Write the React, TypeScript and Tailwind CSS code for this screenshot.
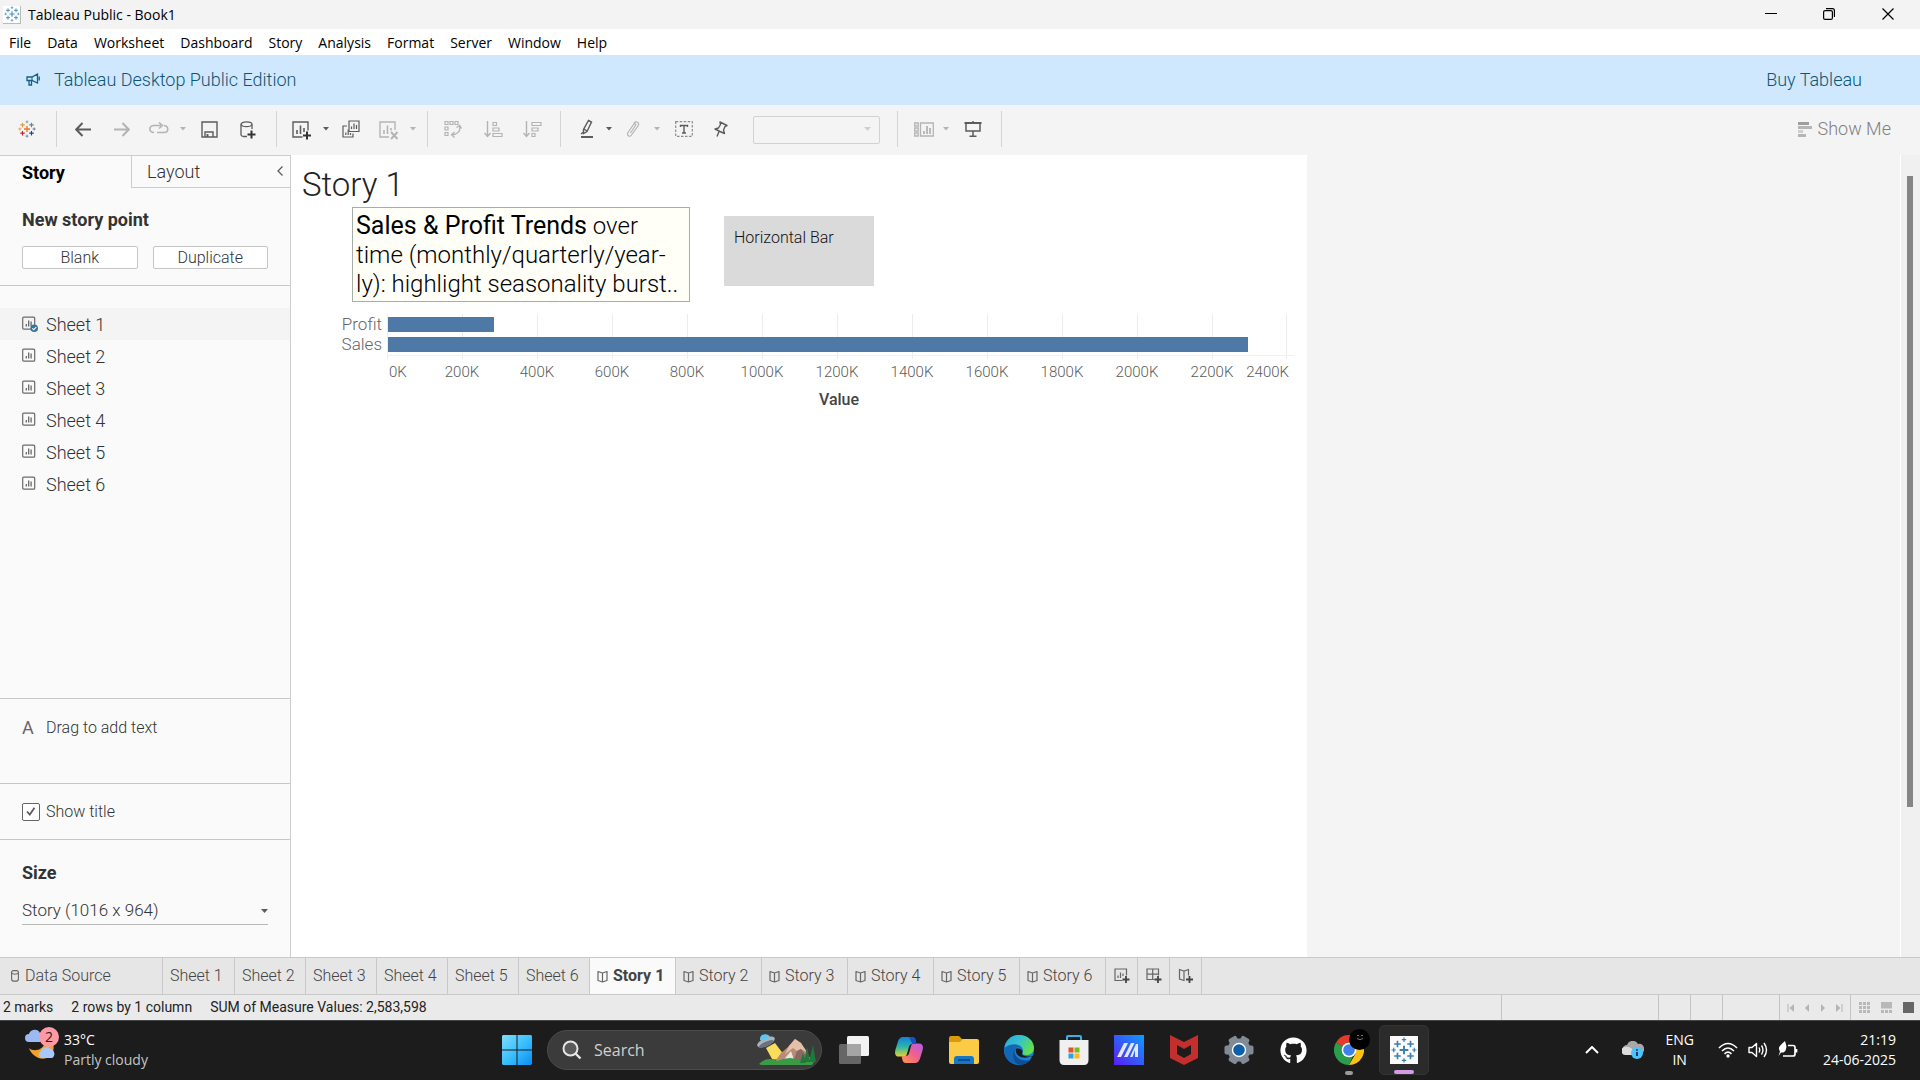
import React from "react";
import { FaGithub } from "react-icons/fa";

type IconProps = { children: React.ReactNode; w: number; h: number; className?: string };

function Icon({ children, w, h, className = "" }: IconProps) {
  return (
    <svg width={w} height={h} viewBox={`0 0 ${w} ${h}`} fill="none" className={`shrink-0 ${className}`} aria-hidden="true">
      {children}
    </svg>
  );
}

/* ---------- Tableau mark ---------- */

const MARK = [
  [12, 12, 4, 1.8, "#e8762c"],
  [6, 6.5, 3, 1.5, "#e59a3c"],
  [18, 6.5, 3, 1.5, "#5b879b"],
  [6, 17.5, 3, 1.5, "#c72035"],
  [18, 17.5, 3, 1.5, "#1f457e"],
  [12, 2.5, 2, 1.1, "#7099a6"],
  [12, 21.5, 2, 1.1, "#59879b"],
  [2.5, 12, 2, 1.1, "#eb912c"],
  [21.5, 12, 2, 1.1, "#5c6692"],
] as const;

function TableauMark({ size, color }: { size: number; color?: string }) {
  return (
    <svg width={size} height={size} viewBox="0 0 24 24" fill="none" aria-hidden="true" className="shrink-0">
      {MARK.map(([x, y, r, sw, c], i) => (
        <path key={i} d={`M${x - r} ${y}H${x + r}M${x} ${y - r}V${y + r}`} stroke={color ?? c} strokeWidth={sw} />
      ))}
    </svg>
  );
}

/* ---------- toolbar ---------- */

const DARK = "#5c5c5c";
const DIM = "#b4b4b4";

function Tool({ label, children, className = "" }: { label: string; children: React.ReactNode; className?: string }) {
  return (
    <button aria-label={label} className={`flex h-8 w-8 shrink-0 items-center justify-center ${className}`}>
      {children}
    </button>
  );
}

function Caret({ dim = false, label, className = "" }: { dim?: boolean; label: string; className?: string }) {
  return (
    <button aria-label={label} className={`flex h-8 w-3 shrink-0 items-center justify-center ${className}`}>
      <Icon w={6} h={4}>
        <path d="M0 0h6L3 3.6z" fill={dim ? DIM : DARK} />
      </Icon>
    </button>
  );
}

function Sep({ className = "" }: { className?: string }) {
  return <div className={`h-9 w-px shrink-0 bg-[#d4d4d4] ${className}`} />;
}

function Toolbar() {
  return (
    <div className="flex h-[50px] shrink-0 items-center bg-[#f4f4f4] pb-[2px] pl-[11px]">
      <Tool label="Start page"><TableauMark size={18} /></Tool>
      <Sep className="ml-[13px]" />
      <Tool label="Undo" className="ml-[10px]">
        <Icon w={16} h={15}><path d="M16 7.5H1.5M7.5 1L1.2 7.5L7.5 14" stroke={DARK} strokeWidth="2" /></Icon>
      </Tool>
      <Tool label="Redo" className="ml-[7px]">
        <Icon w={16} h={15}><path d="M0 7.5H14.5M8.5 1L14.8 7.5L8.5 14" stroke={DIM} strokeWidth="2" /></Icon>
      </Tool>
      <Tool label="Replay animation" className="ml-[5px]">
        <Icon w={20} h={14}>
          <path d="M5 10.5C-.5 10.5-.5 3.5 5 3.5H12M10 .5L13.5 3.5L10 6.5M15 3.5C20 4 20 10.5 15 10.5H8" stroke={DIM} strokeWidth="1.6" />
        </Icon>
      </Tool>
      <Caret dim label="Replay speed" className="ml-[2px]" />
      <Tool label="Save" className="ml-1">
        <Icon w={17} h={17}>
          <path d="M1 1H16V16H1zM4 16V11H12V16" stroke={DARK} strokeWidth="1.4" />
          <path d="M5.5 13h2v3h-2z" fill={DARK} />
        </Icon>
      </Tool>
      <Tool label="New data source" className="ml-[7px]">
        <Icon w={16} h={19} className="mt-[2px]">
          <path d="M7 15.5H3.5C2 15.5 1 14.5 1 13.5V3.5M12 3.5V8" stroke={DARK} strokeWidth="1.3" />
          <ellipse cx="6.5" cy="3.3" rx="5.5" ry="2.4" stroke={DARK} strokeWidth="1.3" />
          <path d="M7.5 13.5H15.5M11.5 9.5V17.5" stroke="#333" strokeWidth="2" />
        </Icon>
      </Tool>
      <Sep className="ml-3" />
      <Tool label="New worksheet" className="ml-[9px]">
        <Icon w={20} h={19} className="mt-[2px]">
          <path d="M10.5 16H1V1H16V9.5" stroke={DARK} strokeWidth="1.4" />
          <path d="M5 13V9M8.5 13V4.5M12 11V7" stroke={DARK} strokeWidth="1.6" />
          <path d="M11 14.5H19M15 10.5V18.5" stroke="#333" strokeWidth="2" />
        </Icon>
      </Tool>
      <Caret label="New sheet options" className="ml-[2px]" />
      <Tool label="Duplicate" className="ml-[3px]">
        <Icon w={18} h={18}>
          <path d="M7 1H17V11.5H7zM5 6H1V17H11V13.5" stroke={DARK} strokeWidth="1.2" />
          <path d="M9.5 9V6.5M12 9V3.5M14.5 9V5M3.8 15V12.5M6.2 15V9.5M8.5 15V13" stroke={DARK} strokeWidth="1.2" />
        </Icon>
      </Tool>
      <Tool label="Clear sheet" className="ml-[6px]">
        <Icon w={20} h={19} className="mt-[2px]">
          <path d="M10 16H1V1H16V9" stroke={DIM} strokeWidth="1.4" />
          <path d="M5 13V9M8.5 13V4.5M12 9.5V7" stroke={DIM} strokeWidth="1.6" />
          <path d="M12 11L18.5 18M18.5 11L12 18" stroke={DIM} strokeWidth="2" />
        </Icon>
      </Tool>
      <Caret dim label="Clear options" className="ml-[2px]" />
      <Sep className="ml-2" />
      <Tool label="Swap rows and columns" className="ml-[9px]">
        <Icon w={18} h={18}>
          <path d="M1 1.5h3v3h-3zM6 1.5h3v3h-3zM11 1.5h3v3h-3zM1 7h3v3h-3zM1 12.5h3v3h-3z" stroke={DIM} strokeWidth="1.2" />
          <path d="M15.5 6C17 11 13.5 14.5 8 14.8M12.5 7.5L15.6 5.5L17.5 8.5M10.5 12L7.5 14.8L10.5 17.5" stroke={DIM} strokeWidth="1.3" />
        </Icon>
      </Tool>
      <Tool label="Sort ascending" className="ml-2">
        <Icon w={19} h={17}>
          <path d="M3.5 0V15M.5 12L3.5 15.5L6.5 12" stroke={DIM} strokeWidth="1.4" />
          <path d="M9 1.5h3.5v3H9zM9 7h6v3H9zM9 12.5h9v3H9z" stroke={DIM} strokeWidth="1.2" />
        </Icon>
      </Tool>
      <Tool label="Sort descending" className="ml-[7px]">
        <Icon w={19} h={17}>
          <path d="M3.5 0V15M.5 12L3.5 15.5L6.5 12" stroke={DIM} strokeWidth="1.4" />
          <path d="M9 1.5h9v3H9zM9 7h6v3H9zM9 12.5h3v3H9z" stroke={DIM} strokeWidth="1.2" />
        </Icon>
      </Tool>
      <Sep className="ml-3" />
      <Tool label="Highlight" className="ml-[10px]">
        <Icon w={14} h={20}>
          <path d="M8.5 1.5L11.5 3L7 12.5L3.5 14.5L3.5 10.5zM4 10L7 12" stroke={DARK} strokeWidth="1.4" />
          <path d="M1 18H13" stroke={DARK} strokeWidth="2" />
          <path d="M1 15L3.5 13" stroke={DARK} strokeWidth="1.4" />
        </Icon>
      </Tool>
      <Caret label="Highlight options" />
      <Tool label="Group members" className="ml-[2px]">
        <Icon w={14} h={17}>
          <path d="M4.5 12L9.5 4.5C10.5 3 8.5 2 7.5 3.5L2 11.5C.5 14 3.5 17 5.5 14L12 5C14 1.5 10 -.5 8 2" stroke={DIM} strokeWidth="1.2" />
        </Icon>
      </Tool>
      <Caret dim label="Group options" className="ml-[2px]" />
      <Tool label="Show mark labels" className="ml-[5px]">
        <Icon w={18} h={16}>
          <path d="M.7 .7H17.3V15.3H.7z" stroke="#8c8c8c" strokeWidth="1.2" strokeDasharray="2.5 1.5" />
          <path d="M5.5 6V4.5H12.5V6M9 4.5V12M7 12H11" stroke={DARK} strokeWidth="1.4" />
        </Icon>
      </Tool>
      <Tool label="Fix axes" className="ml-[5px]">
        <Icon w={14} h={17}>
          <path d="M6 1L13 4.5L11 5.5L9.5 9L10.5 12.5L6 10.5L1 8L4.5 7L6.5 3.5zM5 10.5L3 15.5" stroke={DARK} strokeWidth="1.4" strokeLinejoin="round" />
        </Icon>
      </Tool>
      <select aria-label="Fit" defaultValue="" className="ml-4 mt-[2px] h-7 w-[127px] shrink-0 appearance-none rounded-[2px] border border-[#d2d2d2] bg-[#f4f4f4]">
        <option value="" />
      </select>
      <div className="pointer-events-none -ml-4 w-4">
        <Icon w={7} h={4}><path d="M0 0h7L3.5 4z" fill="#d0d0d0" /></Icon>
      </div>
      <Sep className="ml-[17px]" />
      <Tool label="Show or hide cards" className="ml-[10px]">
        <Icon w={20} h={15}>
          <path d="M.7 1h3.5v3H.7zM.7 6h3.5v3H.7zM.7 11h3.5v3H.7zM6.5 1H19.3V14H6.5z" stroke={DIM} strokeWidth="1.3" />
          <path d="M10 12V9M13 12V4M16 12V6" stroke={DIM} strokeWidth="1.8" />
        </Icon>
      </Tool>
      <Caret dim label="Card options" />
      <Tool label="Presentation mode" className="ml-[5px]">
        <Icon w={18} h={16}>
          <path d="M.5 2H17.5" stroke={DARK} strokeWidth="2" />
          <path d="M2 2V10H16V2M9 10V15M5.5 15.2H12.5M9 0V2" stroke={DARK} strokeWidth="1.5" />
        </Icon>
      </Tool>
      <Sep className="ml-3" />
      <button className="ml-auto mr-[29px] flex items-center gap-[6px] text-[18px] leading-6 text-[#808080]">
        <Icon w={14} h={15}>
          <path d="M0 0h11v3H0z" fill="#9e9e9e" /><path d="M0 4h14v3H0z" fill="#b5b5b5" />
          <path d="M0 8h5v3H0z" fill="#cfcfcf" /><path d="M0 12h8v3H0z" fill="#b5b5b5" />
        </Icon>
        Show Me
      </button>
    </div>
  );
}

/* ---------- side panel ---------- */

function SheetIcon({ checked = false }: { checked?: boolean }) {
  return (
    <Icon w={16} h={16}>
      <rect x=".7" y="1.2" width="12" height="12" rx="1" stroke="#6b6b6b" strokeWidth="1.2" />
      <path d="M4.3 10.5V8M6.7 10.5V4.5M9.1 10.5V5.5" stroke="#5c5c5c" strokeWidth="1.2" />
      {checked && (
        <>
          <circle cx="12.2" cy="12.2" r="3.8" fill="#32769c" />
          <path d="M10.3 12.3l1.5 1.4 2.5-2.7" stroke="#fff" strokeWidth="1.1" />
        </>
      )}
    </Icon>
  );
}

const SHEETS = ["Sheet 1", "Sheet 2", "Sheet 3", "Sheet 4", "Sheet 5", "Sheet 6"];

function SidePanel() {
  return (
    <aside className="flex w-[291px] shrink-0 flex-col border-r border-t border-[#cdcdcd] bg-[#fafafa] text-[#333]">
      <div className="flex h-8 shrink-0">
        <button className="w-[131px] pl-[22px] text-left text-[18px] font-bold text-black">Story</button>
        <div className="flex flex-1 items-center justify-between border-b border-l border-[#cdcdcd] pl-[15px] pr-[7px]">
          <button className="text-[18px]">Layout</button>
          <button aria-label="Collapse panel" className="flex h-6 w-4 items-center justify-end pb-[2px]">
            <Icon w={6} h={10}><path d="M5.5 .5L1 5L5.5 9.5" stroke="#5c5c5c" strokeWidth="1.3" /></Icon>
          </button>
        </div>
      </div>
      <section className="border-b border-[#c6c6c6] px-[22px] pb-4 pt-5">
        <h2 className="text-[18px] font-bold leading-6 text-[#333]">New story point</h2>
        <div className="mt-[14px] grid grid-cols-2 gap-[15px]">
          <button className="h-[23px] rounded-[2px] border border-[#c6c6c6] bg-white text-[16px] leading-5">Blank</button>
          <button className="h-[23px] rounded-[2px] border border-[#c6c6c6] bg-white text-[16px] leading-5">Duplicate</button>
        </div>
      </section>
      <ul className="flex-1 pt-[22px] text-[18px]">
        {SHEETS.map((s, i) => (
          <li key={s} className={i === 0 ? "bg-[#f4f4f4]" : ""}>
            <button className="flex h-8 w-full items-center gap-2 pl-[22px]">
              <SheetIcon checked={i === 0} />
              {s}
            </button>
          </li>
        ))}
      </ul>
      <div className="flex h-[85px] shrink-0 items-start gap-3 border-t border-[#c6c6c6] pl-[22px] pt-[17px] text-[16px] leading-6">
        <span className="w-3 text-[18px] font-normal text-[#666]">A</span>
        Drag to add text
      </div>
      <label className="flex h-14 shrink-0 items-center gap-[6px] border-t border-[#c6c6c6] pl-[22px] text-[16px]">
        <span className="grid h-[18px] w-[18px] place-items-center">
          <input type="checkbox" defaultChecked className="col-start-1 row-start-1 h-[18px] w-[18px] appearance-none rounded-[2px] border border-[#666] bg-white" />
          <Icon w={10} h={9} className="pointer-events-none col-start-1 row-start-1">
            <path d="M1 4.5L3.8 7.5L8.5 .8" stroke="#5c5c5c" strokeWidth="1.8" />
          </Icon>
        </span>
        Show title
      </label>
      <section className="h-[118px] shrink-0 border-t border-[#c6c6c6] px-[22px] pt-[21px]">
        <label htmlFor="size" className="block text-[18px] font-bold leading-6 text-[#333]">Size</label>
        <div className="mt-3 flex items-center border-b border-[#b8b8b8]">
          <select id="size" className="h-[27px] flex-1 appearance-none bg-transparent text-[17px]">
            <option>Story (1016 x 964)</option>
          </select>
          <Icon w={7} h={4} className="pointer-events-none"><path d="M0 0h7L3.5 4z" fill="#5c5c5c" /></Icon>
        </div>
      </section>
    </aside>
  );
}

/* ---------- story ---------- */

const TICKS = [0, 200, 400, 600, 800, 1000, 1200, 1400, 1600, 1800, 2000, 2200, 2400];
const BARS = [
  { name: "Profit", width: 106, y: 3 },
  { name: "Sales", width: 860, y: 23 },
];

function Chart() {
  const x0 = 60;
  return (
    <svg viewBox="0 0 980 104" width={980} height={104} className="ml-[37px] mt-3 block" role="img" aria-label="Profit and Sales bar chart">
      {TICKS.map((t) => (
        <path key={t} d={`M${x0 + t * 0.375 - (t === 2400 ? 1.5 : 0.5)} 0V45`} stroke="#ececec" />
      ))}
      <path d={`M${x0} 41.5H966`} stroke="#f0f0f0" />
      {BARS.map((b) => (
        <g key={b.name}>
          <text x={x0 - 6} y={b.y + 13} textAnchor="end" fontSize="17" fill="#666">{b.name}</text>
          <rect x={x0} y={b.y} width={b.width} height="15" fill="#4e79a7" />
        </g>
      ))}
      {TICKS.map((t) => (
        <text
          key={t}
          x={t === 0 ? x0 + 1 : t === 2400 ? x0 + 901 : x0 + t * 0.375 - 1}
          y="63"
          textAnchor={t === 0 ? "start" : t === 2400 ? "end" : "middle"}
          fontSize="15"
          fill="#5c5c5c"
        >
          {t}K
        </text>
      ))}
      <text x={x0 + 451} y="91" textAnchor="middle" fontSize="16" fontWeight="500" fill="#444">Value</text>
    </svg>
  );
}

function Story() {
  return (
    <main className="flex min-w-0 flex-1 bg-[#f4f4f4]">
      <div className="w-[1016px] shrink-0 bg-white">
        <h1 className="ml-[11px] mt-[10px] text-[33px] leading-10 text-[#222]">Story 1</h1>
        <div className="ml-[61px] mt-[2px] flex items-start gap-[34px]">
          <div className="h-[95px] w-[338px] overflow-hidden whitespace-nowrap border border-[#a9aea4] bg-[#fffff8] pl-[3px] pt-1 text-[24px] leading-[29px] text-black">
            <b className="text-[25px] leading-none">Sales &amp; Profit Trends</b> over<br />
            time (monthly/quarterly/year-<br />
            ly): highlight seasonality burst..
          </div>
          <div className="mt-[9px] h-[70px] w-[150px] bg-[#dadada] px-[10px] pt-3 text-[16px] leading-5 text-[#111]">Horizontal Bar</div>
        </div>
        <Chart />
      </div>
      <div className="ml-auto flex w-5 shrink-0 justify-center border-l border-white bg-[#f0f0f0] pb-[150px] pr-[2px] pt-[21px]">
        <div className="w-[6px] bg-[#858585]" />
      </div>
    </main>
  );
}

/* ---------- workbook tabs and status ---------- */

function Book() {
  return (
    <Icon w={11} h={13}>
      <path d="M5.5 3V12M1 1.5L5.5 3L10 1.5V10.5L5.5 12L1 10.5z" stroke="#666" strokeWidth="1.2" strokeLinejoin="round" />
    </Icon>
  );
}

const TAB = "flex h-full items-center border-r border-[#c9c9c9]";

function WorkbookTabs() {
  return (
    <nav className="flex h-[38px] shrink-0 items-stretch border-b border-t border-[#c9c9c9] bg-[#e6e6e6] text-[16px] text-[#444]">
      <button className={`${TAB} w-[163px] gap-[6px] pl-[11px]`}>
        <Icon w={8} h={12}>
          <rect x=".6" y=".6" width="6.8" height="10.5" rx="2" stroke="#666" strokeWidth="1.1" />
          <path d="M.8 3.5Q4 5 7.2 3.5" stroke="#666" />
        </Icon>
        Data Source
      </button>
      {SHEETS.map((s, i) => (
        <button key={s} className={`${TAB} pl-[7px] ${i === 0 ? "w-[72px]" : "w-[71px]"}`}>{s}</button>
      ))}
      {[1, 2, 3, 4, 5, 6].map((n) => (
        <button key={n} className={`${TAB} w-[86px] gap-[5px] pl-[7px] ${n === 1 ? "bg-[#fafafa] font-bold" : ""}`}>
          <Book />
          Story {n}
        </button>
      ))}
      <button aria-label="New Worksheet" className={`${TAB} w-8 justify-center`}>
        <Icon w={16} h={16}>
          <path d="M8.5 12.5H1V1H12.5V7.5M4 10V7.5M6.5 10V4.5M9 8V5.5" stroke="#666" strokeWidth="1.2" />
          <path d="M8.5 11.5H15.5M12 8V15" stroke="#444" strokeWidth="1.8" />
        </Icon>
      </button>
      <button aria-label="New Dashboard" className={`${TAB} w-8 justify-center`}>
        <Icon w={16} h={16}>
          <path d="M8.5 11.5H1V1H12.5V7.5M6.7 1V11.5M1 6.2H12.5" stroke="#666" strokeWidth="1.2" />
          <path d="M8.5 11.5H15.5M12 8V15" stroke="#444" strokeWidth="1.8" />
        </Icon>
      </button>
      <button aria-label="New Story" className={`${TAB} w-8 justify-center`}>
        <Icon w={16} h={16}>
          <path d="M6 3V12.5L1.5 11V1.5L6 3L10.5 1.5V7.5" stroke="#666" strokeWidth="1.2" />
          <path d="M8 11.5H15M11.5 8V15" stroke="#444" strokeWidth="1.8" />
        </Icon>
      </button>
    </nav>
  );
}

function StatusBar() {
  return (
    <footer className="flex h-[25px] shrink-0 items-stretch bg-[#eaeaea] text-[14px] font-normal leading-[25px] text-[#222]">
      <span className="ml-[3px]">2 marks</span>
      <span className="ml-[18px]">2 rows by 1 column</span>
      <span className="ml-[18px]">SUM of Measure Values: 2,583,598</span>
      <div className="ml-auto flex items-stretch">
        <div className="w-[157px] border-l border-[#c4c4c4]" />
        <div className="w-8 border-l border-[#c4c4c4]" />
        <div className="w-8 border-l border-[#c4c4c4]" />
        <div className="w-[57px] border-l border-[#c4c4c4]" />
        <div className="flex w-[71px] items-center justify-center gap-2 border-l border-[#c4c4c4] pr-px">
          <button aria-label="First"><Icon w={8} h={8}><path d="M1 0V8" stroke="#b4b4b4" /><path d="M7 0V8L2.500 4z" fill="#b4b4b4" /></Icon></button>
          <button aria-label="Previous"><Icon w={8} h={8}><path d="M6 0V8L2 4z" fill="#b4b4b4" /></Icon></button>
          <button aria-label="Next"><Icon w={8} h={8}><path d="M2 0V8L6 4z" fill="#b4b4b4" /></Icon></button>
          <button aria-label="Last"><Icon w={8} h={8}><path d="M7 0V8" stroke="#b4b4b4" /><path d="M1 0V8L5.500 4z" fill="#b4b4b4" /></Icon></button>
        </div>
        <div className="flex w-[70px] items-center gap-[11px] border-l border-[#c4c4c4] pl-2">
          <button aria-label="Sheet sorter">
            <Icon w={11} h={11}><path d="M0 0h3v3H0zM4 0h3v3H4zM8 0h3v3H8zM0 4h3v3H0zM4 4h3v3H4zM8 4h3v3H8zM0 8h3v3H0zM4 8h3v3H4zM8 8h3v3H8z" fill="#b8b8b8" /></Icon>
          </button>
          <button aria-label="Filmstrip">
            <Icon w={11} h={11}><path d="M0 0h11v6.5H0zM0 8h3v3H0zM4 8h3v3H4zM8 8h3v3H8z" fill="#b8b8b8" /></Icon>
          </button>
          <button aria-label="Tabs" className="h-[11px] w-[11px] bg-[#666]" />
        </div>
      </div>
    </footer>
  );
}

/* ---------- Windows taskbar ---------- */

function TaskIcon({ label, children }: { label: string; children: React.ReactNode }) {
  return (
    <button aria-label={label} className="flex h-[50px] w-[55px] shrink-0 items-center justify-center">
      {children}
    </button>
  );
}

function Taskbar() {
  return (
    <div className="grid h-[60px] shrink-0 grid-cols-[1fr_auto_1fr] items-center border-t border-[#454848] bg-[#1c1c1c] pb-px font-['Open_Sans',sans-serif] text-[14px] font-normal leading-5 text-white">
      <button className="flex h-full items-center pl-6 text-left">
        <Icon w={36} h={44} className="-mt-2">
          <path d="M5 24c4 4 14 3 16-6 8 0 10 4 8 9-4 12-20 9-24-3z" fill="#f2a22c" />
          <path d="M5 18a4 4 0 010-8 6 6 0 0111-1 5 5 0 010 9z" fill="#9db9f2" />
          <path d="M17 34a4 4 0 010-7 6 6 0 0110-2 5 5 0 011 9z" fill="#a6c8fb" />
          <circle cx="25" cy="13" r="10" fill="#ff99a4" />
          <text x="25" y="18" textAnchor="middle" fontSize="14" fill="#222">2</text>
        </Icon>
        <span className="ml-1 pb-px">
          <span className="block">33°C</span>
          <span className="block text-[#c4c4c4]">Partly cloudy</span>
        </span>
      </button>

      <div className="flex items-center">
        <TaskIcon label="Start">
          <Icon w={30} h={30}>
            <defs>
              <linearGradient id="win" x1="0" y1="0" x2="1" y2="1">
                <stop stopColor="#7fdcff" /><stop offset=".5" stopColor="#3cc0fc" /><stop offset="1" stopColor="#0a8cf5" />
              </linearGradient>
            </defs>
            <path d="M1 0h13.5v14.5H0V1zM15.5 0H29l1 1v13.5H15.5zM0 15.5h14.5V30H1l-1-1zM15.5 15.5H30V29l-1 1H15.5z" fill="url(#win)" />
          </Icon>
        </TaskIcon>
        <label className="ml-[3px] mr-1 flex h-10 w-[275px] items-center rounded-full border border-[#4c4c4c] bg-[#3b3b3b] pl-[14px] pr-1">
          <Icon w={20} h={20}>
            <circle cx="8.5" cy="8.5" r="7" fill="#5a5a5a" stroke="#e6e6e6" strokeWidth="2" />
            <path d="M13.5 13.5L18.5 18.5" stroke="#e6e6e6" strokeWidth="2.4" />
          </Icon>
          <input type="text" placeholder="Search" aria-label="Search" className="ml-3 min-w-0 flex-1 bg-transparent text-[16px] placeholder:text-[#cfcfcf] focus:outline-none" />
          <Icon w={60} h={32}>
            <path d="M9 14L18 9L27 21Q22 27 15 25z" fill="#f9dc5c" />
            <path d="M17 29L24 19L31 13L38 5L44 9L56 29z" fill="#b98b77" />
            <path d="M38 5L44 9L50 18L44 15L40 17L36 14L28 20L32 12z" fill="#e4bfa9" />
            <path d="M40 17L44 15L54 28H36z" fill="#8a6a60" />
            <path d="M34 17L38 29H24z" fill="#ece3df" />
            <path d="M2 30Q10 22 20 27Q34 21 44 27Q52 24 57 28L55 31H4z" fill="#3b9b45" />
            <path d="M47 28L50 13L53 28zM52 28L56 11L59 28zM43 29L46 19L49 29z" fill="#1e7a3a" />
            <ellipse cx="9" cy="8" rx="9.5" ry="4" transform="rotate(-25 9 8)" fill="#a9b3bd" />
            <ellipse cx="9" cy="10" rx="8" ry="2.2" transform="rotate(-25 9 10)" fill="#68737f" />
            <path d="M3 6C2 0 11 -2 13 3Q8 7 3 6z" fill="#5cc7ec" />
          </Icon>
        </label>
        <TaskIcon label="Task view">
          <Icon w={30} h={28}>
            <rect x="8" width="22" height="20" rx="1.5" fill="#f2f2f2" />
            <rect y="8" width="22" height="20" rx="1.5" fill="#666" />
            <path d="M8 8h14v12H8z" fill="#a5a5a5" />
          </Icon>
        </TaskIcon>
        <TaskIcon label="Copilot">
          <Icon w={28} h={28}>
            <defs>
              <linearGradient id="cp1" x1="0" y1="0" x2="0" y2="1">
                <stop stopColor="#1480e0" /><stop offset=".5" stopColor="#2cb5a8" /><stop offset="1" stopColor="#e8d32c" />
              </linearGradient>
              <linearGradient id="cp2" x1="1" y1="0" x2="0" y2="1">
                <stop stopColor="#b25cf0" /><stop offset=".5" stopColor="#f0608c" /><stop offset="1" stopColor="#ff9a4a" />
              </linearGradient>
            </defs>
            <path d="M8 1h9c2.5 0 3.2 1.5 3.8 4l.6 3h-4c-2 0-3 1-3.5 3l-2 7c-.6 2-1.5 2.6-3.5 2.6H4C0 20.6-.5 17 .5 13.5l2.5-8C4 2.5 5.5 1 8 1z" fill="url(#cp1)" />
            <path d="M20 27h-9c-2.5 0-3.2-1.5-3.8-4l-.6-3h4c2 0 3-1 3.5-3l2-7c.6-2 1.5-2.6 3.5-2.6H24c4 0 4.5 3.6 3.5 7.1l-2.5 8C24 25.5 22.5 27 20 27z" fill="url(#cp2)" />
            <path d="M14 1h3c2.5 0 3.2 1.5 3.8 4l.6 3h-4z" fill="#1b4fc4" />
          </Icon>
        </TaskIcon>
        <TaskIcon label="File Explorer">
          <Icon w={30} h={28}>
            <path d="M0 2Q0 0 2 0H10L13 3H17V9H0z" fill="#d99b0b" />
            <path d="M0 6H11L14 3H28Q30 3 30 5V26Q30 28 28 28H2Q0 28 0 26z" fill="#fccb45" />
            <path d="M5 28V23Q5 20 8 20H22Q25 20 25 23V28z" fill="#1677c4" />
            <path d="M9 24H21" stroke="#0a4f8c" strokeWidth="1.8" />
          </Icon>
        </TaskIcon>
        <TaskIcon label="Edge">
          <Icon w={30} h={30}>
            <defs>
              <linearGradient id="ed1" x1="0" y1="0" x2="1" y2=".5">
                <stop stopColor="#2aa5dc" /><stop offset=".5" stopColor="#35c1d0" /><stop offset="1" stopColor="#62e04e" />
              </linearGradient>
            </defs>
            <circle cx="15" cy="15" r="15" fill="#1a7fd0" />
            <path d="M.5 12C2 4.5 8 0 15 0C24 0 30 6 30 13C30 17.5 26.5 20 22.5 20C19.5 20 18 19 18.5 17.5C20.5 14 17 9.500 12 9.500C6 9.500 2 12 .5 12z" fill="url(#ed1)" />
            <path d="M12 13C8 17 10 25 16 28.5C10 32 1 25 .3 17C0 11 6 9 11 9.500C16 10 19 13.500 18.500 17C17 12 14 11.500 12 13z" fill="#1268b4" />
            <path d="M12 13C8 18 13 27 25.500 25.200C23 29 18 30.500 14 29.500C8 26 8 17 12 13z" fill="#0d4f96" />
            <path d="M12 13.500C10.500 20 17 25 27.500 21.500C28 21.500 28 22 27.500 22.500L26 25C27 25 33 16 30 21L30 20C26 22.500 20 21.500 18 19.500C19 17 19 13 12 13.500z" fill="#1c1c1c" />
          </Icon>
        </TaskIcon>
        <TaskIcon label="Microsoft Store">
          <Icon w={30} h={30}>
            <path d="M8 6V2Q8 1 9 1H21Q22 1 22 2V6" stroke="#36b0e6" strokeWidth="2" />
            <path d="M.5 5H29.5V25Q29.5 30 25 30H5Q.5 30 .5 25z" fill="#f0f0f0" />
            <path d="M9.5 12.5h5v5h-5z" fill="#e6502d" /><path d="M15.5 12.5h5v5h-5z" fill="#7cba1a" />
            <path d="M9.5 18.5h5v5h-5z" fill="#2aa4e8" /><path d="M15.5 18.5h5v5h-5z" fill="#fbb91a" />
          </Icon>
        </TaskIcon>
        <TaskIcon label="MyASUS">
          <Icon w={30} h={30}>
            <defs>
              <linearGradient id="asus" x1="1" y1="0" x2="0" y2="1">
                <stop stopColor="#0d9cff" /><stop offset="1" stopColor="#5a1df0" />
              </linearGradient>
            </defs>
            <path d="M0 0h30v30H0z" fill="url(#asus)" />
            <path d="M3 22L10 8H14L7 22zM10 22L17 8H20.5L13.5 22zM16 22L22 9H24V22H21V15L18.5 22z" fill="#e3e6ff" />
          </Icon>
        </TaskIcon>
        <TaskIcon label="McAfee">
          <Icon w={28} h={30}>
            <path d="M0 0L14 7L28 0V23L14 30L0 23zM7 10V19L14 23L21 19V10L14 14z" fill="#c22f2d" fillRule="evenodd" />
          </Icon>
        </TaskIcon>
        <TaskIcon label="Settings">
          <Icon w={30} h={30}>
            <g fill="#808b96">
              <circle cx="15" cy="15" r="11.5" />
              {[0, 60, 120].map((a) => (
                <rect key={a} x="10.5" y=".5" width="9" height="29" rx="2" transform={`rotate(${a + 30} 15 15)`} />
              ))}
            </g>
            <circle cx="15" cy="15" r="7.2" fill="#fff" />
            <circle cx="15" cy="15" r="5.8" fill="#0f5ea8" />
          </Icon>
        </TaskIcon>
        <TaskIcon label="GitHub"><FaGithub size={27} /></TaskIcon>
        <button aria-label="Chrome" className="relative flex h-[50px] w-[55px] shrink-0 items-center justify-center">
          <Icon w={30} h={30}>
            <path d="M15 15L2 7.5A15 15 0 0128 7.5z" fill="#e33b2e" />
            <path d="M2 7.5L15 15L20 19L15 30A15 15 0 012 7.5z" fill="#2a9d4c" />
            <path d="M15 7.5H28A15 15 0 0115 30L21.5 18.7z" fill="#fbc116" />
            <circle cx="15" cy="15" r="7.3" fill="#fff" />
            <circle cx="15" cy="15" r="5.8" fill="#3f7fee" />
          </Icon>
          <span className="absolute right-[6px] top-[4px] flex h-[21px] w-[21px] justify-center rounded-full bg-black pt-[5px]">
            <Icon w={8} h={7}><path d="M1 1.5h2M5 1.5h2M1 4.5Q4 7 7 4.5" stroke="#777" /></Icon>
          </span>
          <span className="absolute bottom-0 h-[4px] w-2 rounded-full bg-[#9a9a9a]" />
        </button>
        <div className="flex w-[55px] justify-center">
          <button aria-label="Tableau Public" className="relative flex h-[50px] w-[50px] items-center justify-center rounded-[5px] border border-[#333] bg-[#2b2b2b]">
            <span className="flex h-7 w-7 items-center justify-center bg-[#fafafa]"><TableauMark size={26} color="#3d7fae" /></span>
            <span className="absolute bottom-0 h-[4px] w-5 rounded-full bg-[#d49be0]" />
          </button>
        </div>
      </div>

      <div className="flex items-center justify-end pb-px pr-6">
        <button aria-label="Show hidden icons">
          <Icon w={14} h={8}><path d="M1 7L7 1L13 7" stroke="#fff" strokeWidth="2" /></Icon>
        </button>
        <button aria-label="OneDrive" className="ml-[23px]">
          <Icon w={22} h={18}>
            <path d="M5 13a4.500 4.500 0 010-9 6 6 0 0111-1 5 5 0 013 9.500z" fill="#a8a8a8" />
            <path d="M4 14a4 4 0 01-1-8q5-1 9 4l-2 4z" fill="#dcdcdc" />
            <circle cx="15" cy="12" r="6" fill="#4cc2ff" />
            <path d="M15 11V15M15 8.300V9.800" stroke="#123" strokeWidth="1.600" />
          </Icon>
        </button>
        <button className="ml-[21px] text-center">ENG<br />IN</button>
        <button aria-label="Network, volume and battery" className="ml-6 flex items-center gap-[10px]">
          <Icon w={20} h={16}>
            <path d="M1 6Q10 -3 19 6M4 9Q10 3 16 9M6.5 11.8Q10 8.5 13.5 11.8" stroke="#fff" strokeWidth="1.6" />
            <circle cx="10" cy="14" r="1.7" fill="#fff" />
          </Icon>
          <Icon w={20} h={18}>
            <path d="M1 6.5H4L8.5 2.5V15.5L4 11.5H1z" stroke="#fff" strokeWidth="1.4" strokeLinejoin="round" />
            <path d="M11 6.5Q12.5 9 11 11.5M13.5 4.5Q16.5 9 13.5 13.5M16 2Q21 9 16 16" stroke="#fff" strokeWidth="1.4" />
          </Icon>
          <Icon w={20} h={17}>
            <path d="M10 4.5H15Q17 4.5 17 6.5V13Q17 15 15 15H5M18.5 8V11.5" stroke="#fff" strokeWidth="1.7" />
            <path d="M7 0C8 4 9 5 8 8C7.5 11 5 12 3 11.5L.5 15L2 10.5C-1 6 3 4 7 0z" fill="#fff" />
          </Icon>
        </button>
        <button className="ml-[25px] text-right">21:19<br />24-06-2025</button>
      </div>
    </div>
  );
}

/* ---------- window ---------- */

const MENU = ["File", "Data", "Worksheet", "Dashboard", "Story", "Analysis", "Format", "Server", "Window", "Help"];

export default function App() {
  return (
    <div className="flex min-h-screen flex-col overflow-hidden bg-[#f4f4f4] font-[Roboto,sans-serif] font-light">
      <header className="flex h-[29px] shrink-0 items-center bg-[#f3f3f3] pl-[3px] pr-[2px] font-['Open_Sans',sans-serif] text-[14px] font-normal text-black">
        <span className="flex h-[18px] w-[18px] items-center justify-center border-b border-r border-[#bbb] bg-white">
          <TableauMark size={16} color="#4f91bd" />
        </span>
        <span className="ml-[7px]">Tableau Public - Book1</span>
        <div className="ml-auto flex pb-[2px]">
          <button aria-label="Minimize" className="flex h-[27px] w-[58px] items-center justify-center"><Icon w={12} h={12}><path d="M0 5.5H12" stroke="#000" /></Icon></button>
          <button aria-label="Restore" className="flex h-[27px] w-[58px] items-center justify-center">
            <Icon w={12} h={12}>
              <rect x=".6" y="2.6" width="8.8" height="8.8" rx="1.5" stroke="#000" strokeWidth="1.2" />
              <path d="M3 .6H9.5Q11.4 .6 11.4 2.5V9" stroke="#000" strokeWidth="1.2" />
            </Icon>
          </button>
          <button aria-label="Close" className="flex h-[27px] w-[60px] items-center justify-center"><Icon w={12} h={12}><path d="M.5 .5L11.5 11.5M11.5 .5L.5 11.5" stroke="#000" strokeWidth="1.2" /></Icon></button>
        </div>
      </header>
      <nav className="flex h-[26px] shrink-0 items-center gap-4 bg-white pl-[9px] font-['Open_Sans',sans-serif] text-[14px] font-normal text-black">
        {MENU.map((m) => <button key={m}>{m}</button>)}
      </nav>
      <div className="flex h-[50px] shrink-0 items-center bg-[#cfe8fe] pb-px pl-[26px] pr-[58px] text-[18px] text-[#0d5675]">
        <Icon w={14} h={13}>
          <path d="M1 4H6L11.5 1V10L6 7.5H1zM3 8V12H5.5V8M13.2 3.5V7.5" stroke="#16607f" strokeWidth="1.3" />
          <path d="M6 4V7.5" stroke="#16607f" />
        </Icon>
        <span className="ml-[14px]">Tableau Desktop Public Edition</span>
        <a href="#buy" className="ml-auto">Buy Tableau</a>
      </div>
      <Toolbar />
      <div className="flex flex-1">
        <SidePanel />
        <Story />
      </div>
      <WorkbookTabs />
      <StatusBar />
      <Taskbar />
    </div>
  );
}
